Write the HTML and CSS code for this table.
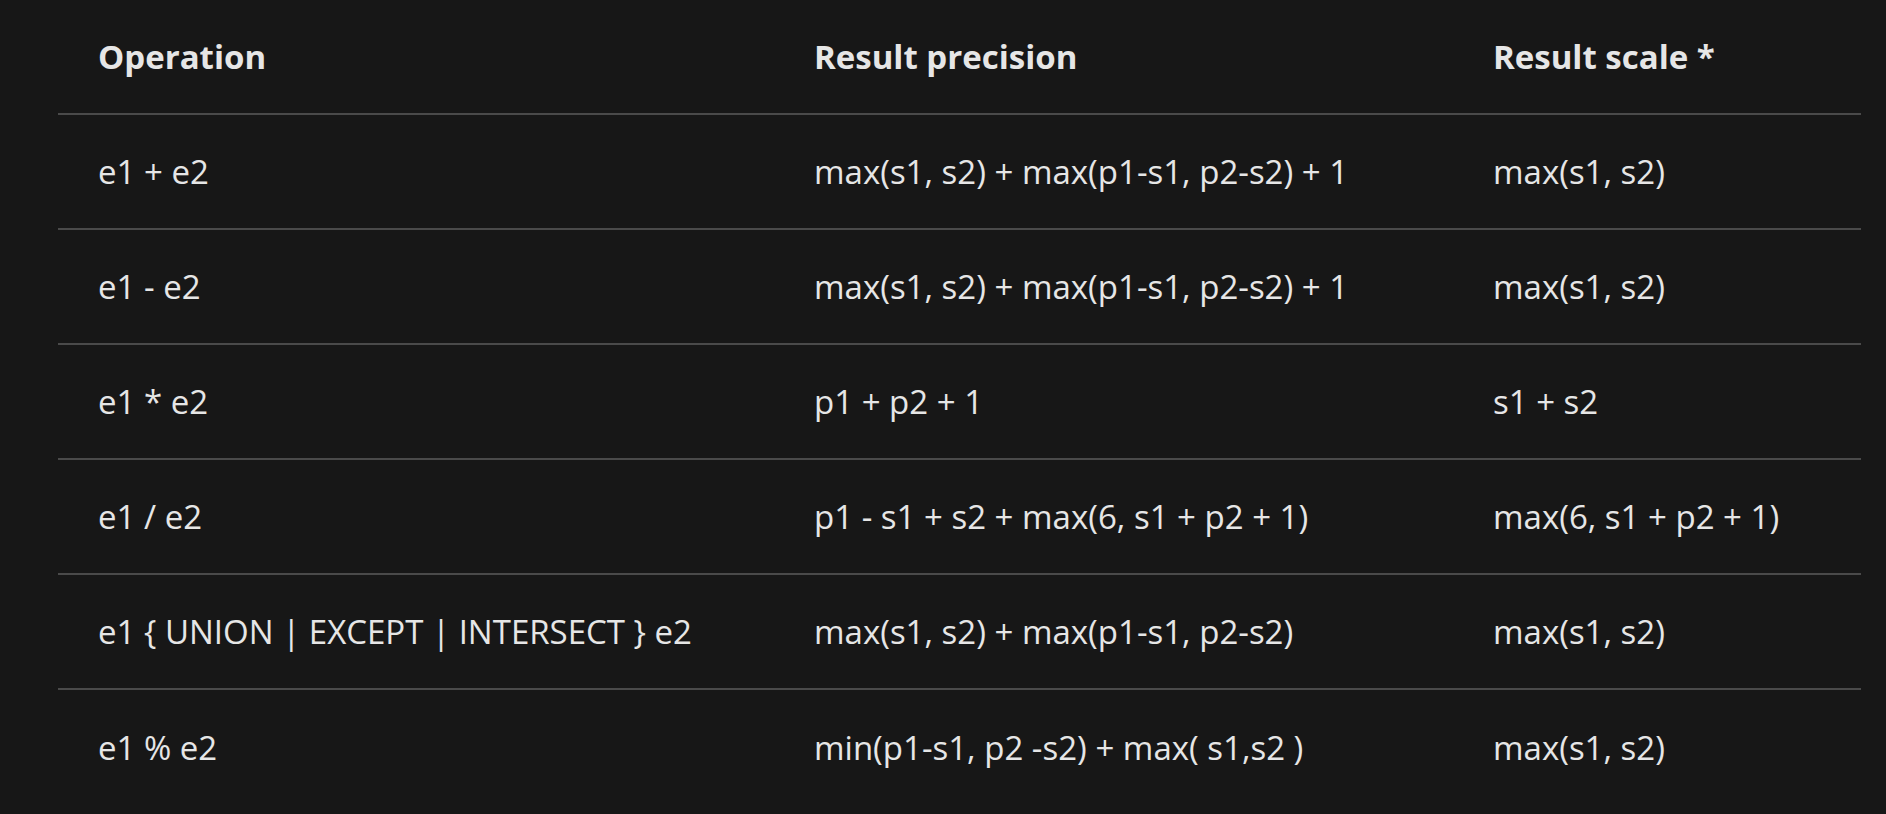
FILE: index.html
```html
<!DOCTYPE html>
<html lang="en">
<head>
<meta charset="utf-8">
<title>Result precision and scale</title>
<link rel="stylesheet" href="styles.css">
</head>
<body>
<main class="page">
  <table class="ops">
    <colgroup>
      <col class="c-op">
      <col class="c-prec">
      <col class="c-scale">
    </colgroup>
    <thead>
      <tr>
        <th>Operation</th>
        <th>Result precision</th>
        <th>Result scale *</th>
      </tr>
    </thead>
    <tbody>
      <tr>
        <td>e1 + e2</td>
        <td>max(s1, s2) + max(p1-s1, p2-s2) + 1</td>
        <td>max(s1, s2)</td>
      </tr>
      <tr>
        <td>e1 - e2</td>
        <td>max(s1, s2) + max(p1-s1, p2-s2) + 1</td>
        <td>max(s1, s2)</td>
      </tr>
      <tr>
        <td>e1 * e2</td>
        <td>p1 + p2 + 1</td>
        <td>s1 + s2</td>
      </tr>
      <tr>
        <td>e1 / e2</td>
        <td>p1 - s1 + s2 + max(6, s1 + p2 + 1)</td>
        <td>max(6, s1 + p2 + 1)</td>
      </tr>
      <tr>
        <td>e1 { UNION | EXCEPT | INTERSECT } e2</td>
        <td>max(s1, s2) + max(p1-s1, p2-s2)</td>
        <td>max(s1, s2)</td>
      </tr>
      <tr>
        <td>e1 % e2</td>
        <td>min(p1-s1, p2 -s2) + max( s1,s2 )</td>
        <td>max(s1, s2)</td>
      </tr>
    </tbody>
  </table>
</main>
</body>
</html>
```

FILE: styles.css
```css
html, body {
  margin: 0;
  padding: 0;
  background: #171717;
}

body {
  color: #e6e6e6;
  font-family: "Open Sans", "Noto Sans", "Liberation Sans", sans-serif;
  font-size: 33px;
}

.page {
  padding-left: 58px;
  width: 1803px;
}

.ops {
  width: 1803px;
  border-collapse: separate;
  border-spacing: 0;
  table-layout: fixed;
}

.c-op { width: 716px; }
.c-prec { width: 679px; }
.c-scale { width: 408px; }

.ops th,
.ops td {
  height: 115px;
  padding: 0 0 0 40px;
  text-align: left;
  vertical-align: middle;
  white-space: nowrap;
  box-sizing: border-box;
  line-height: 1.2;
}

.ops th {
  font-weight: 700;
  border-bottom: 2px solid #4a4a4a;
}

.ops tbody tr:not(:last-child) td {
  border-bottom: 2px solid #4a4a4a;
}
```
